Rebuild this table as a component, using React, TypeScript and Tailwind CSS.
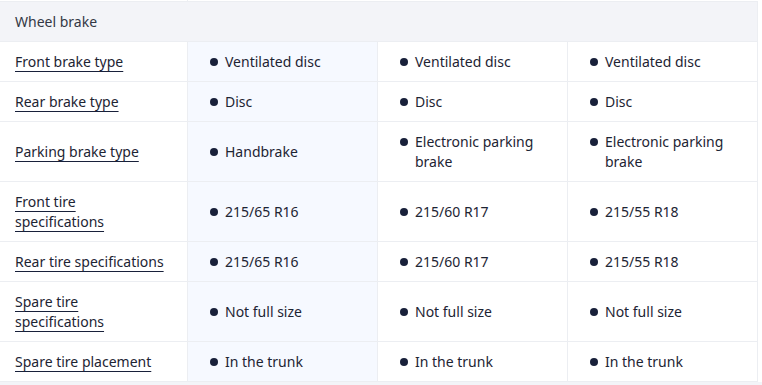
import React from 'react'

type Row = {
  label: string[]
  values: string[][]
  tall?: boolean
}

const rows: Row[] = [
  { label: ['Front brake type'], values: [['Ventilated disc'], ['Ventilated disc'], ['Ventilated disc']] },
  { label: ['Rear brake type'], values: [['Disc'], ['Disc'], ['Disc']] },
  {
    label: ['Parking brake type'],
    values: [['Handbrake'], ['Electronic parking', 'brake'], ['Electronic parking', 'brake']],
    tall: true,
  },
  {
    label: ['Front tire', 'specifications'],
    values: [['215/65 R16'], ['215/60 R17'], ['215/55 R18']],
    tall: true,
  },
  { label: ['Rear tire specifications'], values: [['215/65 R16'], ['215/60 R17'], ['215/55 R18']] },
  {
    label: ['Spare tire', 'specifications'],
    values: [['Not full size'], ['Not full size'], ['Not full size']],
    tall: true,
  },
  { label: ['Spare tire placement'], values: [['In the trunk'], ['In the trunk'], ['In the trunk']] },
]

const cols = 'grid grid-cols-[188px_190px_190px_190px]'

function Value({ lines }: { lines: string[] }) {
  return (
    <div className="flex items-start gap-[7px]">
      <span className="mt-[6px] h-[8px] w-[8px] shrink-0 rounded-full bg-[#18203a]" />
      <span className="leading-5">
        {lines.map((l, i) => (
          <span key={i} className="block">
            {l}
          </span>
        ))}
      </span>
    </div>
  )
}

export default function App() {
  return (
    <div
      className="flex h-[385px] w-[762px] flex-col bg-white text-[14px] text-[#1d2433]"
      style={{ fontFamily: '"Noto Sans", "Liberation Sans", sans-serif' }}
    >
      {/* tail of the previous section */}
      <div className={`${cols} h-[2px] w-[758px] border-b border-[#eceef2]`}>
        <div className="border-r border-[#eceef2]" />
        <div />
        <div />
        <div />
      </div>

      <div className="flex h-[40px] w-[758px] items-center border-r border-b border-[#eceef2] bg-[#f3f4f8] px-[15px] text-[#333845]">
        Wheel brake
      </div>

      {rows.map((r, i) => (
        <div key={i} className={`${cols} w-[758px] ${r.tall ? 'h-[60px]' : 'h-[40px]'}`}>
          <div className="flex items-center border-r border-b border-[#eceef2] px-[15px]">
            <span className="leading-5">
              {r.label.map((l, j) => (
                <span key={j} className="block">
                  <span className="underline decoration-[#18203a] underline-offset-[4px]">{l}</span>
                </span>
              ))}
            </span>
          </div>
          {r.values.map((v, j) => (
            <div
              key={j}
              className={`flex items-center border-r border-b border-[#eceef2] pl-[22px] ${
                j === 0 ? 'bg-[#f6f9ff]' : ''
              }`}
            >
              <Value lines={v} />
            </div>
          ))}
        </div>
      ))}

      <div className="flex-1 bg-[#f3f4f8]" />
    </div>
  )
}
